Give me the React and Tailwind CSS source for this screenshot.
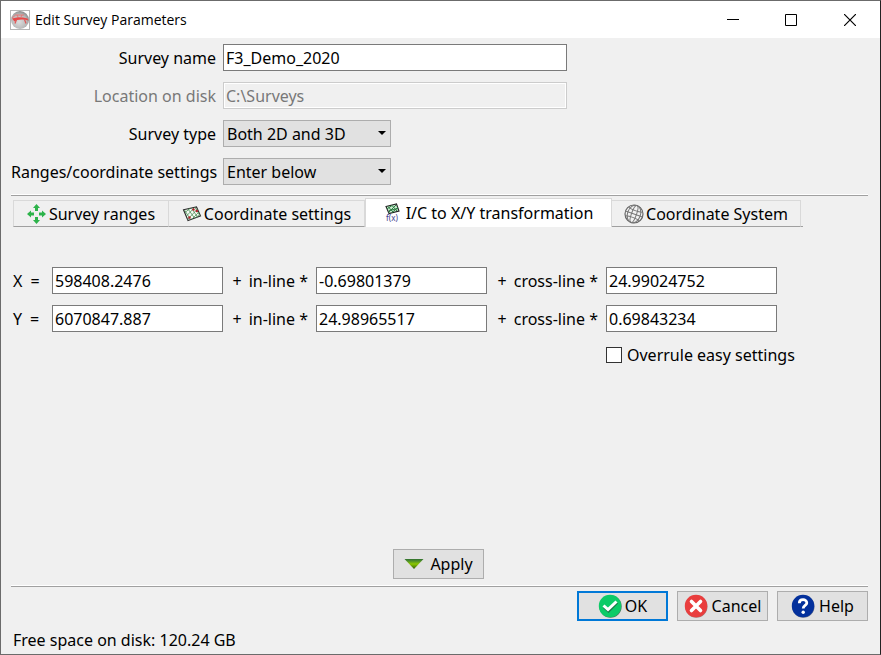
import React from "react";

const FIELD =
  "h-[27px] border border-[#7a7a7a] bg-white px-[2px] text-black outline-none rounded-none";
const BUTTON =
  "flex h-[30px] w-[91px] items-center justify-center border border-[#adadad] bg-[#e1e1e1]";

function AppIcon() {
  return (
    <svg width="20" height="20" viewBox="0 0 20 20" aria-hidden="true">
      <defs>
        <radialGradient id="disc" cx="45%" cy="60%" r="60%">
          <stop offset="0" stopColor="#dedede" />
          <stop offset="0.7" stopColor="#b8b8b8" />
          <stop offset="1" stopColor="#8a8a8a" />
        </radialGradient>
      </defs>
      <rect x="0.5" y="0.5" width="19" height="19" fill="#fff" stroke="#b5b5b5" />
      <circle cx="10" cy="10" r="9" fill="url(#disc)" />
      <path d="M5 5H14M2 8 5 5.500M7 5 8 7M12 5 11 7" fill="none" stroke="#e87070" strokeWidth="0.9" />
      <path
        d="M2 8.500 8 7.200 13 7.500 17.500 8.500 18.500 10.500 15.500 9.800 12 9.500 7 10 4.500 11.500Z"
        fill="#e84848"
      />
      <path d="M6.500 9.500 5 13.500M14.500 9.500 16 13.500" stroke="#e25555" strokeWidth="1.200" />
    </svg>
  );
}

function RangesIcon() {
  return (
    <svg width="20" height="20" viewBox="0 0 20 20" aria-hidden="true" fill="#2db34a">
      <path d="M9.500 0 13 4H11V7H8V4H6Z" />
      <path d="M9.500 20 13 16H11V13H8V16H6Z" />
      <path d="M0 10 4 6.500V8.500H7V11.500H4V13.500Z" />
      <path d="M19 10 15 6.500V8.500H12V11.500H15V13.500Z" />
    </svg>
  );
}

function GridIcon() {
  return (
    <svg width="20" height="20" viewBox="0 0 20 20" aria-hidden="true">
      <path d="M1.500 5.800 14.500 3 18.500 12 6 16.500Z" fill="#f4faf4" stroke="#2b2b2b" strokeWidth="1.1" />
      <path
        d="M3 8.500 8 4.500M4.500 12 12.500 3.500M5.500 15.500 15.500 5M10 15 17 8M14 13.500 18 10M2.500 6 8.500 15.500M6 5 12.500 14M9.500 4.300 15.500 13M13 3.500 18 11.500"
        fill="none"
        stroke="#4f8f58"
        strokeWidth="0.8"
      />
      <g fill="#b3202a">
        <circle cx="11.500" cy="5.500" r="1.200" />
        <circle cx="14.800" cy="7" r="1.200" />
        <circle cx="7.500" cy="13.500" r="1.200" />
      </g>
    </svg>
  );
}

function TransformIcon() {
  return (
    <svg width="18" height="20" viewBox="0 0 18 20" aria-hidden="true">
      <path d="M2 3.500 12.500 1 15 8 5 10.500Z" fill="#c9ecd0" stroke="#222" strokeWidth="1.1" />
      <path
        d="M3 6 8 2.500M4.500 9.500 12 2M8 9.500 14 4.500M4 3.500 9 9M8 2.500 13 8M5 7.500 14 5.500"
        fill="none"
        stroke="#2e7d43"
        strokeWidth="1"
      />
      <text x="2" y="18" fontSize="8" fontFamily="Noto Sans, sans-serif" fill="#3c3c8c">
        f(x)
      </text>
    </svg>
  );
}

function GlobeIcon() {
  return (
    <svg width="20" height="20" viewBox="0 0 20 20" aria-hidden="true">
      <circle cx="10" cy="10" r="9" fill="#f2f2f2" stroke="#666" strokeWidth="1.200" />
      <g fill="none" stroke="#777" strokeWidth="1" transform="rotate(20 10 10)">
        <ellipse cx="10" cy="10" rx="2.500" ry="9" />
        <ellipse cx="10" cy="10" rx="6.500" ry="9" />
        <path d="M1 10H19M2.500 5.500Q10 7.500 17.500 5.500M2.500 14.500Q10 12.500 17.500 14.500" />
      </g>
    </svg>
  );
}

function ApplyIcon() {
  return (
    <svg width="20" height="20" viewBox="0 0 20 20" aria-hidden="true">
      <defs>
        <linearGradient id="tri" x1="0" y1="0" x2="0" y2="1">
          <stop offset="0" stopColor="#2f6f2f" />
          <stop offset="0.2" stopColor="#4e8e2c" />
          <stop offset="0.5" stopColor="#8cc800" />
          <stop offset="1" stopColor="#2c5a10" />
        </linearGradient>
      </defs>
      <path d="M0.500 5H19.500L10 15Z" fill="url(#tri)" />
    </svg>
  );
}

function OkIcon() {
  return (
    <svg width="24" height="24" viewBox="0 0 24 24" aria-hidden="true">
      <circle cx="12.500" cy="12.500" r="11.200" fill="#4f7a60" />
      <circle cx="12" cy="12" r="11.200" fill="#0ccb67" />
      <path d="M6 13 10.500 17 19 8.500" fill="none" stroke="#187a48" strokeWidth="3" />
      <path d="M5.500 11.500 10 15.500 18.500 7.500" fill="none" stroke="#fff" strokeWidth="3" />
    </svg>
  );
}

function CancelIcon() {
  return (
    <svg width="24" height="24" viewBox="0 0 24 24" aria-hidden="true">
      <circle cx="12.300" cy="12.500" r="11.200" fill="#a87878" />
      <circle cx="12" cy="12" r="11.200" fill="#e93d3d" />
      <path d="M7.500 7.500 16.500 16.500M16.500 7.500 7.500 16.500" stroke="#fff" strokeWidth="3.600" strokeLinecap="round" />
    </svg>
  );
}

function HelpIcon() {
  return (
    <svg width="24" height="24" viewBox="0 0 24 24" aria-hidden="true">
      <circle cx="12.300" cy="12.500" r="11.200" fill="#66708a" />
      <circle cx="12" cy="12" r="11.200" fill="#03309c" />
      <path
        d="M8.300 9.300C8.300 4.500 15.800 4.500 15.800 9C15.800 11.500 12.200 11.500 12.200 14.500"
        fill="none"
        stroke="#fff"
        strokeWidth="2.800"
      />
      <circle cx="12.200" cy="18.200" r="1.700" fill="#fff" />
    </svg>
  );
}

function Rule() {
  return <hr className="h-[2px] border-0 border-t border-b border-t-white border-b-[#a0a0a0]" />;
}

function Choice({ id, value }) {
  return (
    <div className="relative w-[168px]">
      <select
        id={id}
        defaultValue={value}
        className="h-[27px] w-full appearance-none rounded-none border border-[#adadad] bg-[#e1e1e1] px-[3px] text-black"
      >
        <option>{value}</option>
      </select>
      <svg className="pointer-events-none absolute top-[11px] right-[5px]" width="8" height="4" viewBox="0 0 8 4" aria-hidden="true">
        <path d="M0 0H8L4 4Z" fill="#000" />
      </svg>
    </div>
  );
}

function Tab({ icon, label, active, className }) {
  const look = active
    ? "h-[29px] gap-1 border border-b-0 border-[#d9d9d9] bg-white"
    : "h-[27px] gap-[2px] border-t border-r border-b border-t-[#d9d9d9] border-r-[#d9d9d9] border-l-[#d9d9d9] border-b-[#a0a0a0]";
  return (
    <button
      type="button"
      role="tab"
      aria-selected={active ? "true" : "false"}
      className={`flex items-center justify-center ${look} ${className}`}
    >
      {icon}
      {label}
    </button>
  );
}

function Equation({ axis, constant, inline, crossline }) {
  return (
    <div className="flex items-center">
      <label htmlFor={`${axis}-0`} className="flex w-[39px] gap-2">
        <span>{axis}</span>
        <span>=</span>
      </label>
      <input id={`${axis}-0`} defaultValue={constant} className={`${FIELD} w-[171px]`} />
      <label htmlFor={`${axis}-in`} className="flex w-[93px] justify-end gap-[7px] pr-2 whitespace-nowrap">
        <span>+</span>
        <span>in-line *</span>
      </label>
      <input id={`${axis}-in`} defaultValue={inline} className={`${FIELD} w-[171px]`} />
      <label htmlFor={`${axis}-cross`} className="flex w-[119px] justify-end gap-[7px] pr-2 whitespace-nowrap">
        <span>+</span>
        <span>cross-line *</span>
      </label>
      <input id={`${axis}-cross`} defaultValue={crossline} className={`${FIELD} w-[171px]`} />
    </div>
  );
}

export default function App() {
  return (
    <div className="flex min-h-screen flex-col border border-[#6b6b6b] border-r-[#222] bg-[#f0f0f0] font-['Noto_Sans',sans-serif] text-[16px] leading-[24px] text-black">
      <header className="flex h-[37px] items-center bg-white pl-[9px]">
        <AppIcon />
        <h1 className="ml-[5px] flex-1 font-['Open_Sans',sans-serif] text-[14px]">Edit Survey Parameters</h1>
        <button type="button" aria-label="Minimize" className="flex h-full w-[58px] items-center justify-center">
          <svg width="12" height="12" viewBox="0 0 12 12"><path d="M0 5.500H12" stroke="#000" /></svg>
        </button>
        <button type="button" aria-label="Maximize" className="flex h-full w-[58px] items-center justify-center">
          <svg width="12" height="12" viewBox="0 0 12 12"><path d="M.5.5H11.500V11.500H.5Z" fill="none" stroke="#000" /></svg>
        </button>
        <button type="button" aria-label="Close" className="flex h-full w-[60px] items-center justify-center">
          <svg width="12" height="12" viewBox="0 0 12 12"><path d="M0 0 12 12M12 0 0 12" stroke="#000" strokeWidth="1.200" /></svg>
        </button>
      </header>

      <main className="flex flex-1 flex-col pr-3 pl-[10px]">
        <div className="mt-[6px] mb-[9px] grid grid-cols-[205px_1fr] items-center gap-x-[7px] gap-y-[11px]">
          <label htmlFor="name" className="text-right whitespace-nowrap">Survey name</label>
          <input id="name" defaultValue="F3_Demo_2020" className={`${FIELD} w-[344px]`} />
          <label htmlFor="disk" className="text-right whitespace-nowrap text-[#787878]">Location on disk</label>
          <input
            id="disk"
            disabled
            defaultValue="C:\Surveys"
            className="h-[27px] w-[344px] rounded-none border border-[#cccccc] bg-[#f0f0f0] px-[2px] text-[#787878] shadow-[inset_0_0_0_1px_#fff]"
          />
          <label htmlFor="type" className="text-right whitespace-nowrap">Survey type</label>
          <Choice id="type" value="Both 2D and 3D" />
          <label htmlFor="ranges" className="text-right whitespace-nowrap">Ranges/coordinate settings</label>
          <Choice id="ranges" value="Enter below" />
        </div>
        <Rule />
        <div role="tablist" className="mt-[2px] flex items-end whitespace-nowrap pl-[2px]">
          <Tab icon={<RangesIcon />} label="Survey ranges" className="w-[156px] border-l" />
          <Tab icon={<GridIcon />} label="Coordinate settings" className="w-[196px]" />
          <Tab active icon={<TransformIcon />} label="I/C to X/Y transformation" className="w-[247px]" />
          <Tab icon={<GlobeIcon />} label="Coordinate System" className="w-[189px]" />
          <span className="w-[2px] border-b border-[#a0a0a0]" />
        </div>

        <section className="mt-10 flex flex-col gap-[11px] pl-[2px]">
          <Equation axis="X" constant="598408.2476" inline="-0.69801379" crossline="24.99024752" />
          <Equation axis="Y" constant="6070847.887" inline="24.98965517" crossline="0.69843234" />
          <div className="flex h-[24px] items-center gap-[5px] pl-[593px]">
            <input
              id="overrule"
              type="checkbox"
              className="h-4 w-4 appearance-none border border-[#333] bg-white checked:bg-[#0078d7]"
            />
            <label htmlFor="overrule" className="whitespace-nowrap">Overrule easy settings</label>
          </div>
        </section>

        <div className="mt-auto mb-[6px] flex justify-center pr-[2px]">
          <button type="button" className={`${BUTTON} gap-[6px]`}>
            <ApplyIcon />
            Apply
          </button>
        </div>
        <Rule />
        <div className="mt-1 flex justify-end gap-[9px]">
          <button type="button" className="flex h-[30px] w-[91px] items-center justify-center gap-[3px] border-2 border-[#0078d7] bg-[#e1e1e1]">
            <OkIcon />
            OK
          </button>
          <button type="button" className={`${BUTTON} gap-1`}>
            <CancelIcon />
            Cancel
          </button>
          <button type="button" className={`${BUTTON} gap-1`}>
            <HelpIcon />
            Help
          </button>
        </div>
        <footer className="mt-[7px] mb-[2px] pl-[2px]">Free space on disk: 120.24 GB</footer>
      </main>
    </div>
  );
}
